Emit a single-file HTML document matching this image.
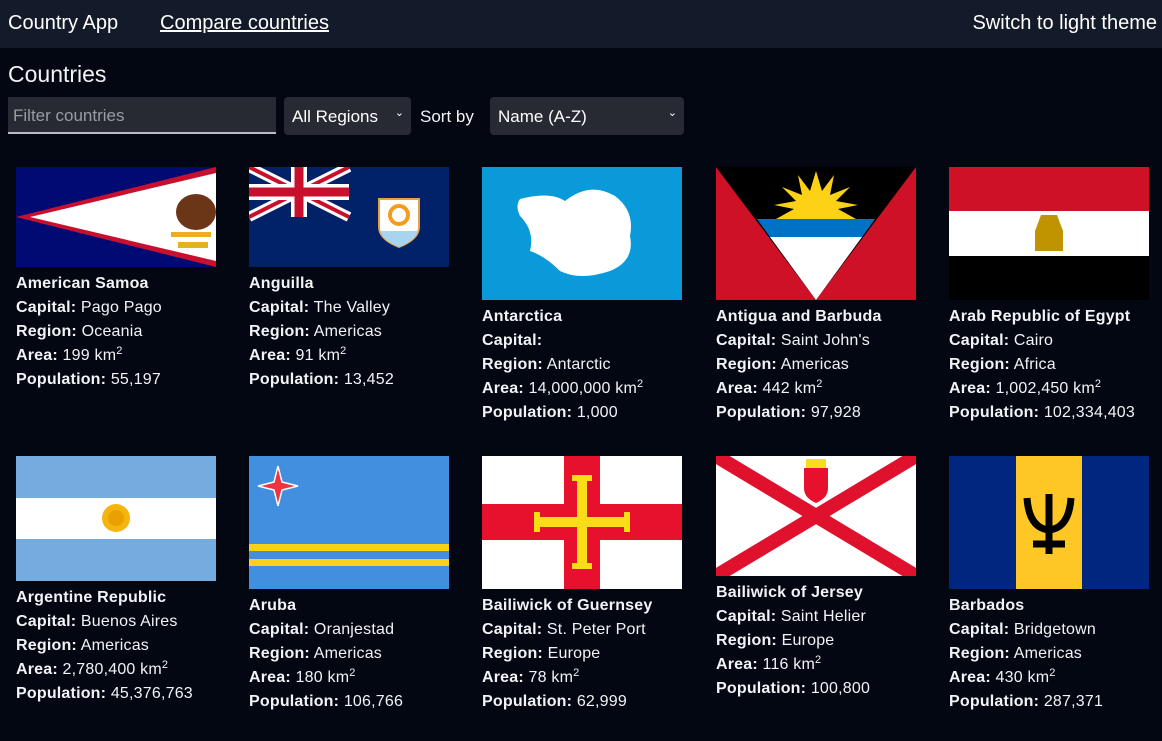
<!DOCTYPE html>
<html><head><meta charset="utf-8"><style>
*{box-sizing:border-box;margin:0;padding:0}
body{width:1162px;height:741px;overflow:hidden;background:#030711;color:#f1f3f6;font-family:"Liberation Sans",sans-serif;font-size:16px;position:relative}
.hdr{position:absolute;left:0;top:0;width:1162px;height:48px;background:#131a2a}
.hdr span{position:absolute;top:12px;font-size:20px;color:#fff}
h1{position:absolute;left:8px;top:61px;font-size:23px;font-weight:normal}
.inp{position:absolute;left:8px;top:97px;width:268px;height:37px;background:#272a33;border-bottom:2px solid #b9bcc4;color:#9a9ca3;font-size:17px;padding:9px 5px}
.sel{position:absolute;top:97px;height:38px;background:#272a33;border-radius:4px;font-size:17px;padding:10px 8px;color:#fff}
.sel i{position:absolute;right:7px;top:9px;font-style:normal;font-size:11px}
.card{position:absolute;width:200px}
.card svg{display:block}
.t{margin-top:5px;line-height:24px;white-space:nowrap;letter-spacing:0.2px}
.t b{font-weight:bold}
sup{font-size:11px;line-height:0;vertical-align:6px}
</style></head><body>
<div class="hdr"><span style="left:8px">Country App</span><span style="left:160px;text-decoration:underline">Compare countries</span><span style="right:5px">Switch to light theme</span></div>
<h1>Countries</h1>
<div class="inp">Filter countries</div>
<div class="sel" style="left:284px;width:127px">All Regions<i>⌄</i></div>
<div style="position:absolute;left:420px;top:107px;font-size:17px">Sort by</div>
<div class="sel" style="left:490px;width:194px">Name (A-Z)<i>⌄</i></div>

<div class="card" style="left:16px;top:167px"><svg width="200" height="100"><rect width="200" height="100" fill="#000a73"/><path d="M0 50 200 0V100Z" fill="#c8102e"/><path d="M14 50 200 6V94Z" fill="#fff"/><ellipse cx="180" cy="45" rx="20" ry="18" fill="#6b3518"/><path d="M155 65h40v5h-40zM162 75h30v6h-30z" fill="#e8b020"/></svg>
<div class="t"><b>American Samoa</b><br><b>Capital:</b> Pago Pago<br><b>Region:</b> Oceania<br><b>Area:</b> 199 km<sup>2</sup><br><b>Population:</b> 55,197</div></div>

<div class="card" style="left:249px;top:167px"><svg width="200" height="100"><rect width="200" height="100" fill="#012169"/><path d="M0 0 100 50M100 0 0 50" stroke="#fff" stroke-width="10"/><path d="M0 0 100 50M100 0 0 50" stroke="#c8102e" stroke-width="4"/><path d="M50 0v50M0 25h100" stroke="#fff" stroke-width="16"/><path d="M50 0v50M0 25h100" stroke="#c8102e" stroke-width="9"/><path d="M130 32h40v28q0 12-20 20q-20-8-20-20z" fill="#fff" stroke="#e8a040" stroke-width="2"/><circle cx="150" cy="48" r="9" fill="none" stroke="#f39c1e" stroke-width="4"/><path d="M131 64h38q-3 10-19 16q-16-6-19-16z" fill="#a8d4f0"/></svg>
<div class="t"><b>Anguilla</b><br><b>Capital:</b> The Valley<br><b>Region:</b> Americas<br><b>Area:</b> 91 km<sup>2</sup><br><b>Population:</b> 13,452</div></div>

<div class="card" style="left:482px;top:167px"><svg width="200" height="133"><rect width="200" height="133" fill="#0a9ad9"/><path d="M38 32q30-8 45 2q25-20 50-5q20 15 15 40q5 25-20 35q-30 10-50 0q-15-15-30-20q5-20-10-35q-5-10 0-17z" fill="#fff"/></svg>
<div class="t"><b>Antarctica</b><br><b>Capital:</b> <br><b>Region:</b> Antarctic<br><b>Area:</b> 14,000,000 km<sup>2</sup><br><b>Population:</b> 1,000</div></div>

<div class="card" style="left:716px;top:167px"><svg width="200" height="133"><rect width="200" height="133" fill="#ce1126"/><path d="M0 0h200L100 133z" fill="#000"/><path d="M41 52h118l-13 18H54z" fill="#0072c6"/><path d="M54 70h92l-46 63z" fill="#fff"/><path d="M60 52l18-10-20-4 22-4-14-14 20 8-4-20 12 16 6-20 6 20 12-16-4 20 20-8-14 14 22 4-20 4 18 10z" fill="#fcd116"/></svg>
<div class="t"><b>Antigua and Barbuda</b><br><b>Capital:</b> Saint John's<br><b>Region:</b> Americas<br><b>Area:</b> 442 km<sup>2</sup><br><b>Population:</b> 97,928</div></div>

<div class="card" style="left:949px;top:167px"><svg width="200" height="133"><rect width="200" height="44" fill="#ce1126"/><rect y="44" width="200" height="45" fill="#fff"/><rect y="89" width="200" height="44" fill="#000"/><path d="M92 48h16l6 16v20h-28V64z" fill="#c09300"/></svg>
<div class="t"><b>Arab Republic of Egypt</b><br><b>Capital:</b> Cairo<br><b>Region:</b> Africa<br><b>Area:</b> 1,002,450 km<sup>2</sup><br><b>Population:</b> 102,334,403</div></div>

<div class="card" style="left:16px;top:456px"><svg width="200" height="125"><rect width="200" height="125" fill="#74acdf"/><rect y="42" width="200" height="41" fill="#fff"/><circle cx="100" cy="62" r="14" fill="#f6b40e"/><circle cx="100" cy="62" r="8" fill="#e9a000"/></svg>
<div class="t"><b>Argentine Republic</b><br><b>Capital:</b> Buenos Aires<br><b>Region:</b> Americas<br><b>Area:</b> 2,780,400 km<sup>2</sup><br><b>Population:</b> 45,376,763</div></div>

<div class="card" style="left:249px;top:456px"><svg width="200" height="133"><rect width="200" height="133" fill="#418fde"/><rect y="88" width="200" height="7" fill="#fcd116"/><rect y="103" width="200" height="7" fill="#fcd116"/><path d="M29 10l4 16 16 4-16 4-4 16-4-16-16-4 16-4z" fill="#ef3340" stroke="#fff" stroke-width="1.5"/></svg>
<div class="t"><b>Aruba</b><br><b>Capital:</b> Oranjestad<br><b>Region:</b> Americas<br><b>Area:</b> 180 km<sup>2</sup><br><b>Population:</b> 106,766</div></div>

<div class="card" style="left:482px;top:456px"><svg width="200" height="133"><rect width="200" height="133" fill="#fff"/><path d="M100 0v133M0 66h200" stroke="#e8112d" stroke-width="36"/><path d="M100 22v88M55 66h90" stroke="#f9dd16" stroke-width="10"/><path d="M90 22h20M90 110h20M55 56v20M145 56v20" stroke="#f9dd16" stroke-width="6"/></svg>
<div class="t"><b>Bailiwick of Guernsey</b><br><b>Capital:</b> St. Peter Port<br><b>Region:</b> Europe<br><b>Area:</b> 78 km<sup>2</sup><br><b>Population:</b> 62,999</div></div>

<div class="card" style="left:716px;top:456px"><svg width="200" height="120"><rect width="200" height="120" fill="#fff"/><path d="M0 0 200 120M200 0 0 120" stroke="#df112d" stroke-width="14"/><path d="M88 12h24v20q0 10-12 15q-12-5-12-15z" fill="#e8112d"/><path d="M90 3h20v9H90z" fill="#f9dd16"/></svg>
<div class="t"><b>Bailiwick of Jersey</b><br><b>Capital:</b> Saint Helier<br><b>Region:</b> Europe<br><b>Area:</b> 116 km<sup>2</sup><br><b>Population:</b> 100,800</div></div>

<div class="card" style="left:949px;top:456px"><svg width="200" height="133"><rect width="200" height="133" fill="#00267f"/><rect x="67" width="66" height="133" fill="#ffc726"/><path d="M100 38v60M78 42q2 30 22 32q20-2 22-32M84 88h32" stroke="#000" stroke-width="7" fill="none"/></svg>
<div class="t"><b>Barbados</b><br><b>Capital:</b> Bridgetown<br><b>Region:</b> Americas<br><b>Area:</b> 430 km<sup>2</sup><br><b>Population:</b> 287,371</div></div>
</body></html>
